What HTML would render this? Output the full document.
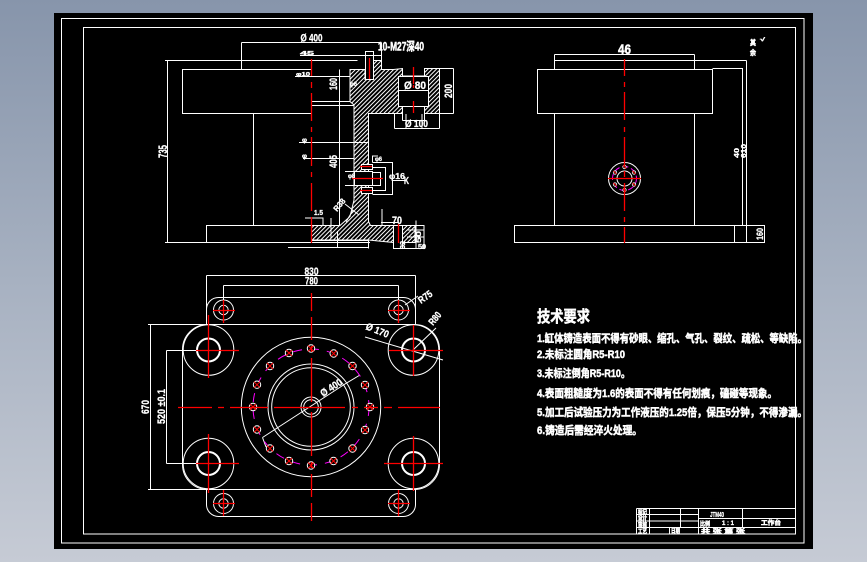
<!DOCTYPE html>
<html><head><meta charset="utf-8">
<style>
html,body{margin:0;padding:0;width:867px;height:562px;overflow:hidden;background:linear-gradient(180deg,#8795ab 0%,#a7b1c1 50%,#c6cbd5 100%)}
svg{position:absolute;left:0;top:0}
text{fill:#fff;font-family:"Liberation Sans","Noto Sans CJK SC",sans-serif;font-weight:bold;stroke:#fff;stroke-width:.3}
text.c{stroke-width:.5}
</style></head><body>
<svg width="867" height="562" viewBox="0 0 867 562" xmlns="http://www.w3.org/2000/svg">
<defs>
<pattern id="h" width="3" height="3" patternUnits="userSpaceOnUse" patternTransform="rotate(45)">
<rect width="3" height="3" fill="#000"/><rect width="1" height="3" fill="#fff"/>
</pattern>
<g id="b"><circle r="3.7" fill="#000" stroke="#fff"/><path d="M-3-3L3 3M-3 3L3-3" stroke="#f00" stroke-width="1"/></g>
<g id="s"><circle r="1.7" fill="#000" stroke="#fff" stroke-width=".8"/><path d="M-1.5-1.5L1.5 1.5" stroke="#f00"/></g>
</defs>
<rect x="54" y="13" width="759" height="536" fill="#000"/>
<g fill="none" stroke="#fff" stroke-width="1">
<rect x="61.5" y="18.5" width="742.5" height="524.5"/>
<rect x="83.5" y="27.5" width="712" height="506.5"/>

<!-- FRONT VIEW -->
<path d="M311 69.5H182.5V113.5H311M253.5 113.5V225M311 225.5H206.5V242.5H311"/>
<path fill="url(#h)" d="M350 69.5H365V79.5H373.5V60.5H381.5V69.5H393.5L402.5 68.5V76H424.5V68.5H439.5V113.5H424.5V106.5H402.5V113.5H368.5V221.5L370.5 225.5H415V242.5H393.5L368.5 240H311.5V225.5H340L350 216.5L354 200V105L350 101.5Z"/>
<rect x="365.5" y="51.5" width="8" height="28" fill="#000"/>
<rect x="398.5" y="76.5" width="30" height="30" fill="#000"/>
<path d="M398.5 90.5H428.5M402.5 106.5V120.5M424.5 106.5V120.5M402.5 120.5H424.5"/>
<rect x="393.5" y="225.5" width="9" height="23" fill="#000"/>
<rect x="354.5" y="171.5" width="18" height="14" fill="#000"/>
<rect x="361.5" y="164.5" width="11" height="5" fill="#000"/>
<rect x="361.5" y="187.5" width="11" height="6" fill="#000"/>
<path d="M167.5 60.5V242.5M165 60.5H357.5M165 242.5H370M241.5 42.5V69.5M241.5 42.5H381.5M300 55.5H381.5M381.5 42.5V60.5M295 76.5H350"/>
<path d="M311 101.5H350M311 105.5H354M339.5 69.5V225M299 142.5H368.5M303 158.5H354M288 247.5H368.5M368.5 240V248.5M311 240.5H368.5"/>
<path d="M394.5 113.5V128.5M439.5 113.5V128.5M394.5 128.5H439.5M439.5 68.5H453.5M439.5 113.5H453.5M453.5 68.5V113.5M406 114V128M422 114V128"/>
<path d="M372.5 162.5H392.5V194.5H372.5M372.5 167.5H385.5V190.5H372.5M372.5 172.5H380.5V185.5H372.5M392.5 180.5H405M372.5 162.5V156H378M345 171.5H354M345 185.5H354"/>
<path d="M382 226V209M398 222.5H381M416 220.5V248.5M393.5 248.5H425M407 230H424M407 237H424M416 225.5H424V248.5M315 218H323V226M305 218H323M331 218V238M337.5 231V247"/>
<path d="M359 215L345 204M353 210L346 222"/>

<!-- SIDE VIEW -->
<path d="M554.5 54.5H694.5M554.5 54.5V69M694.5 54.5V69M554.5 60.5H746.5M554.5 113.5V225M694.5 113.5V225M537.5 69.5H712.5V113.5H537.5ZM514.5 225.5H746.5V242.5H514.5ZM712.5 68.5H742.5V225M746.5 60.5V242.5M734.5 225.5V242.5M746.5 225.5H764.5V242.5H746.5"/>
<circle cx="624.5" cy="178.5" r="16"/>
<circle cx="624.5" cy="178.5" r="7.5"/>
</g>

<!-- side flange details -->
<circle cx="624.5" cy="178.5" r="12" fill="none" stroke="#f0f" stroke-dasharray="6 3"/>
<use href="#s" x="624.5" y="167"/><use href="#s" x="634" y="172.5"/><use href="#s" x="634" y="184.5"/>
<use href="#s" x="624.5" y="190"/><use href="#s" x="615" y="184.5"/><use href="#s" x="615" y="172.5"/>

<!-- TOP VIEW -->
<g fill="none" stroke="#fff" stroke-width="1">
<rect x="182.5" y="324.5" width="257" height="165" rx="25"/>
<path d="M206.5 324.5V309A12 12 0 0 1 218.5 297.5H403.5A12 12 0 0 1 415.5 309V324.5M206.5 489.5V505A12 12 0 0 0 218.5 516.5H403.5A12 12 0 0 0 415.5 505V489.5"/>
<g id="ears">
<circle cx="223.5" cy="310" r="10"/><circle cx="223.5" cy="310" r="4.7"/>
<circle cx="398.5" cy="310" r="10"/><circle cx="398.5" cy="310" r="4.7"/>
<circle cx="223.5" cy="503.5" r="10"/><circle cx="223.5" cy="503.5" r="4.7"/>
<circle cx="398.5" cy="503.5" r="10"/><circle cx="398.5" cy="503.5" r="4.7"/>
</g>
<circle cx="208.5" cy="350" r="25.3" fill="#000"/><circle cx="413.5" cy="350" r="25.3" fill="#000"/>
<circle cx="208.5" cy="463.5" r="25.3" fill="#000"/><circle cx="413.5" cy="463.5" r="25.3" fill="#000"/>
<g stroke-width="2">
<circle cx="208.5" cy="350" r="11.5"/><circle cx="413.5" cy="350" r="11.5"/>
<circle cx="208.5" cy="463.5" r="11.5"/><circle cx="413.5" cy="463.5" r="11.5"/>
</g>
<circle cx="311" cy="407" r="69.7"/>
<circle cx="311" cy="407" r="43"/>
<circle cx="311" cy="407" r="39.3"/>
<circle cx="311" cy="407" r="10"/>
<circle cx="311" cy="407" r="7.3"/>
<path d="M206.5 324V275.5M415.5 324V275.5M206.5 275.5H415.5M223.5 310V285.5M398.5 310V285.5M223.5 285.5H398.5"/>
<path d="M148 324.5H206M148 489.5H206M150.5 324.5V489.5M166.5 350.5H208M166.5 463.5H208M166.5 350.5V463.5"/>
<path d="M262.5 437.5L345 384M262.5 437.5L266 447M345 384L360 375"/>
<path d="M405 305L418 296M413 350L436 328M365 337L443 360"/>
</g>
<circle cx="311" cy="407" r="58" fill="none" stroke="#f0f" stroke-dasharray="9 8"/>
<g>
<use href="#b" x="311" y="348.5"/><use href="#b" x="333.7" y="353.5"/><use href="#b" x="352.5" y="366"/>
<use href="#b" x="365" y="385"/><use href="#b" x="370" y="407"/><use href="#b" x="365" y="430"/>
<use href="#b" x="352.5" y="448.5"/><use href="#b" x="333.5" y="461"/><use href="#b" x="311" y="465.5"/>
<use href="#b" x="289" y="461"/><use href="#b" x="270" y="448.5"/><use href="#b" x="257" y="429.5"/>
<use href="#b" x="253" y="407"/><use href="#b" x="257" y="384.7"/><use href="#b" x="270" y="366"/><use href="#b" x="289" y="353"/>
</g>

<!-- RED CENTER LINES -->
<g fill="none" stroke="#ff0000" stroke-width="1.3">
<path d="M311.5 59V76M311.5 82V88M311.5 93V121M311.5 127V132M311.5 137V166M311.5 172V177M311.5 183V211M311.5 217V243"/>
<path d="M624.5 59V76M624.5 82V87M624.5 92V120M624.5 127V132M624.5 137V166M624.5 171V177M624.5 183V211M624.5 217V222M624.5 227V243"/>
<path d="M369.5 58V79M413.5 67V84M413.5 85V88M413.5 101V113"/>
<path d="M352 178.5H383M360 166.5H372M360 190.5H372M398.5 224V243"/>
<path d="M311.5 293V311M311.5 317V340M311.5 346V352M311.5 358V402M311.5 412V456M311.5 462V468M311.5 474V497M311.5 503V521"/>
<path d="M178 407.5H212M218 407.5H224M230 407.5H268M274 407.5H345M352 407.5H358M364 407.5H378M384 407.5H392M398 407.5H440"/>
<path d="M208.5 315V378M413.5 325V376M208.5 434V493M413.5 436V491M196 350.5H239M389 350.5H443M196 463.5H239M384 463.5H443"/>
<path d="M223.5 300V323M398.5 300V323M223.5 490V516M398.5 490V516M213 310.5H235M388 310.5H410M213 503.5H235M388 503.5H410"/>
<path d="M608 178.5H641"/>
</g>

<!-- DIMENSION TEXT -->
<text x="300.5" y="41.5" font-size="11" textLength="22" lengthAdjust="spacingAndGlyphs">Ø 400</text>
<text x="378" y="50.5" font-size="12" textLength="46" lengthAdjust="spacingAndGlyphs" class="c">10-M27深40</text>
<text transform="translate(167,158) rotate(-90)" font-size="12" textLength="13" lengthAdjust="spacingAndGlyphs">735</text>
<text transform="translate(337,90) rotate(-90)" font-size="11" textLength="12" lengthAdjust="spacingAndGlyphs">160</text>
<text transform="translate(337,168) rotate(-90)" font-size="11" textLength="13" lengthAdjust="spacingAndGlyphs">405</text>
<text transform="translate(452,98) rotate(-90)" font-size="11" textLength="14" lengthAdjust="spacingAndGlyphs">200</text>
<text x="404" y="89" font-size="11" textLength="22" lengthAdjust="spacingAndGlyphs">Ø 80</text>
<text x="405" y="127" font-size="10" textLength="23" lengthAdjust="spacingAndGlyphs">Ø 100</text>
<text x="392" y="224" font-size="11" textLength="10" lengthAdjust="spacingAndGlyphs">70</text>
<text x="404" y="184" font-size="10" textLength="5" lengthAdjust="spacingAndGlyphs">K</text>
<text x="314" y="215" font-size="7" textLength="9" lengthAdjust="spacingAndGlyphs">1.5</text>
<text transform="translate(337,212) rotate(-50)" font-size="8" textLength="14" lengthAdjust="spacingAndGlyphs">R38</text>
<text x="300" y="55" font-size="5" textLength="14" lengthAdjust="spacingAndGlyphs">45</text>
<text x="296" y="76" font-size="5" textLength="14" lengthAdjust="spacingAndGlyphs">φ10</text>
<text x="302" y="142" font-size="6" textLength="5" lengthAdjust="spacingAndGlyphs">φ</text>
<text x="302" y="158" font-size="6" textLength="5" lengthAdjust="spacingAndGlyphs">φ</text>
<text x="350" y="86" font-size="6" textLength="7" lengthAdjust="spacingAndGlyphs">φ6</text>
<text x="348" y="178" font-size="6" textLength="7" lengthAdjust="spacingAndGlyphs">φ8</text>
<text x="375" y="161" font-size="6" textLength="7" lengthAdjust="spacingAndGlyphs">φ6</text>
<text x="389" y="179" font-size="8" textLength="16" lengthAdjust="spacingAndGlyphs">φ16</text>
<text transform="translate(421,243) rotate(-90)" font-size="7" textLength="12" lengthAdjust="spacingAndGlyphs">50</text>
<text transform="translate(405,249) rotate(-90)" font-size="7" textLength="8" lengthAdjust="spacingAndGlyphs">32</text>
<text x="418" y="249" font-size="7" textLength="8" lengthAdjust="spacingAndGlyphs">50</text>

<text x="304.5" y="275" font-size="11" textLength="14" lengthAdjust="spacingAndGlyphs">830</text>
<text x="305" y="284.5" font-size="11" textLength="13" lengthAdjust="spacingAndGlyphs">780</text>
<text transform="translate(149,414) rotate(-90)" font-size="11" textLength="14" lengthAdjust="spacingAndGlyphs">670</text>
<text transform="translate(165,424) rotate(-90)" font-size="11" textLength="35" lengthAdjust="spacingAndGlyphs">520 ±0.1</text>
<text transform="translate(421,304) rotate(-35)" font-size="10" textLength="15" lengthAdjust="spacingAndGlyphs">R75</text>
<text transform="translate(433,326) rotate(-50)" font-size="10" textLength="14" lengthAdjust="spacingAndGlyphs">R80</text>
<text transform="translate(365,329) rotate(22)" font-size="10" textLength="24" lengthAdjust="spacingAndGlyphs">Ø 170</text>
<text transform="translate(323,397) rotate(-33)" font-size="10" textLength="24" lengthAdjust="spacingAndGlyphs">Ø 400</text>

<text x="618" y="54" class="c" font-size="14" textLength="13" lengthAdjust="spacingAndGlyphs">46</text>
<text transform="translate(746,158) rotate(-90)" font-size="7" textLength="14" lengthAdjust="spacingAndGlyphs">610</text>
<text transform="translate(739,158) rotate(-90)" font-size="7" textLength="10" lengthAdjust="spacingAndGlyphs">40</text>
<text transform="translate(763,240) rotate(-90)" font-size="9" textLength="12" lengthAdjust="spacingAndGlyphs">160</text>
<text x="750" y="45" font-size="7" textLength="6" lengthAdjust="spacingAndGlyphs" class="c">其</text>
<text x="750" y="55" font-size="7" textLength="6" lengthAdjust="spacingAndGlyphs" class="c">余</text>
<text x="760" y="41" font-size="5" textLength="5" lengthAdjust="spacingAndGlyphs">√</text>

<!-- REQUIREMENTS -->
<text class="c" x="537" y="322" font-size="16" textLength="53" lengthAdjust="spacingAndGlyphs">技术要求</text>
<text class="c" x="537" y="342" font-size="11" textLength="270" lengthAdjust="spacingAndGlyphs">1.缸体铸造表面不得有砂眼、缩孔、气孔、裂纹、疏松、等缺陷。</text>
<text class="c" x="537" y="358" font-size="11" textLength="88" lengthAdjust="spacingAndGlyphs">2.未标注圆角R5-R10</text>
<text class="c" x="537" y="377" font-size="11" textLength="93" lengthAdjust="spacingAndGlyphs">3.未标注倒角R5-R10。</text>
<text class="c" x="537" y="397" font-size="11" textLength="240" lengthAdjust="spacingAndGlyphs">4.表面粗糙度为1.6的表面不得有任何划痕，磕碰等现象。</text>
<text class="c" x="537" y="416" font-size="11" textLength="270" lengthAdjust="spacingAndGlyphs">5.加工后试验压力为工作液压的1.25倍，保压5分钟，不得渗漏。</text>
<text class="c" x="537" y="434" font-size="11" textLength="105" lengthAdjust="spacingAndGlyphs">6.铸造后需经淬火处理。</text>

<!-- TITLE BLOCK -->
<g fill="none" stroke="#fff" stroke-width="1">
<path d="M636.5 508.5H795.5M636.5 508.5V534M636.5 514.5H698.5M636.5 521H698.5M636.5 527.5H795.5M649.5 508.5V534M680.5 508.5V527.5M698.5 508.5V534M742.5 508.5V527.5M698.5 518.5H795.5M669.5 527.5V534"/>
</g>
<text class="c" x="638" y="514" font-size="6" textLength="9" lengthAdjust="spacingAndGlyphs">标记</text>
<text class="c" x="638" y="520" font-size="6" textLength="9" lengthAdjust="spacingAndGlyphs">设计</text>
<text class="c" x="638" y="527" font-size="6" textLength="9" lengthAdjust="spacingAndGlyphs">审核</text>
<text class="c" x="638" y="533.5" font-size="6" textLength="9" lengthAdjust="spacingAndGlyphs">工艺</text>
<text class="c" x="671" y="533" font-size="6" textLength="9" lengthAdjust="spacingAndGlyphs">日期</text>
<text x="710" y="517" font-size="7" textLength="14" lengthAdjust="spacingAndGlyphs">JTM40</text>
<text class="c" x="700" y="526" font-size="6" textLength="10" lengthAdjust="spacingAndGlyphs">比例</text>
<text x="722" y="525" font-size="6" textLength="12" lengthAdjust="spacingAndGlyphs">1 : 1</text>
<text class="c" x="761" y="525" font-size="6" textLength="20" lengthAdjust="spacingAndGlyphs">工作台</text>
<text class="c" x="701" y="533.5" font-size="6" textLength="44" lengthAdjust="spacingAndGlyphs">共 张 第 张</text>
</svg>
</body></html>
